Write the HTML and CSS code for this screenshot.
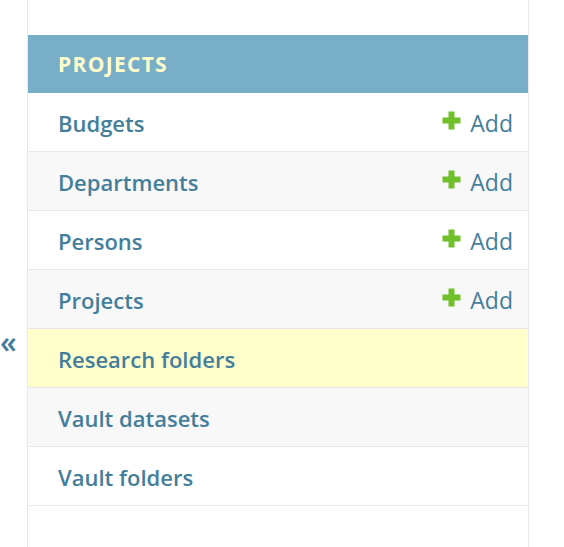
FILE: index.html
```html
<!DOCTYPE html>
<html lang="en">
<head>
<meta charset="utf-8">
<title>Projects</title>
<link rel="stylesheet" href="styles.css">
</head>
<body>
<div class="page">
  <button class="toggle" type="button" aria-label="Toggle navigation">«</button>
  <nav class="sidebar">
    <div class="module">
      <div class="caption">Projects</div>
      <div class="row">
        <a class="model" href="#">Budgets</a>
        <a class="add" href="#"><svg class="plus" viewBox="0 0 19 19" width="19" height="19"><path d="M6.5 0.5h6v6h6v6h-6v6h-6v-6h-6v-6h6z" fill="#70bf2b"/></svg>Add</a>
      </div>
      <div class="row alt">
        <a class="model" href="#">Departments</a>
        <a class="add" href="#"><svg class="plus" viewBox="0 0 19 19" width="19" height="19"><path d="M6.5 0.5h6v6h6v6h-6v6h-6v-6h-6v-6h6z" fill="#70bf2b"/></svg>Add</a>
      </div>
      <div class="row">
        <a class="model" href="#">Persons</a>
        <a class="add" href="#"><svg class="plus" viewBox="0 0 19 19" width="19" height="19"><path d="M6.5 0.5h6v6h6v6h-6v6h-6v-6h-6v-6h6z" fill="#70bf2b"/></svg>Add</a>
      </div>
      <div class="row alt">
        <a class="model" href="#">Projects</a>
        <a class="add" href="#"><svg class="plus" viewBox="0 0 19 19" width="19" height="19"><path d="M6.5 0.5h6v6h6v6h-6v6h-6v-6h-6v-6h6z" fill="#70bf2b"/></svg>Add</a>
      </div>
      <div class="row current">
        <a class="model" href="#">Research folders</a>
      </div>
      <div class="row alt">
        <a class="model" href="#">Vault datasets</a>
      </div>
      <div class="row">
        <a class="model" href="#">Vault folders</a>
      </div>
    </div>
  </nav>
</div>
</body>
</html>
```
FILE: styles.css
```css
html, body {
  margin: 0;
  padding: 0;
  background: #fff;
}
body {
  font-family: "Open Sans", "Noto Sans", "DejaVu Sans", sans-serif;
  color: #333;
}
.page {
  display: flex;
  height: 547px;
  overflow: hidden;
}
.toggle {
  width: 27px;
  flex: none;
  border: 0;
  background: transparent;
  padding: 325px 0 0 0;
  margin: 0;
  align-self: flex-start;
  text-align: left;
  color: #447e9b;
  font-family: "Open Sans", sans-serif;
  font-weight: 600;
  font-size: 30px;
  line-height: 34px;
  cursor: pointer;
}
.sidebar {
  width: 500px;
  flex: none;
  border-left: 1px solid #e8e8e8;
  border-right: 1px solid #e8e8e8;
  padding-top: 35px;
}
.caption {
  height: 58px;
  background: #79aec8;
  color: #ffffcc;
  text-transform: uppercase;
  font-weight: 700;
  font-size: 21px;
  letter-spacing: 1.3px;
  display: flex;
  align-items: center;
  padding-left: 30px;
}
.row {
  height: 58px;
  border-bottom: 1px solid #e8e8e8;
  display: flex;
  align-items: center;
  justify-content: space-between;
  padding: 0 15px 0 30px;
  background: #fff;
}
.row.alt {
  background: #f8f8f8;
}
.row.current {
  background: #ffffcc;
}
.model {
  color: #447e9b;
  text-decoration: none;
  font-weight: 600;
  font-size: 22px;
  position: relative;
  top: 1px;
}
.add {
  color: #447e9b;
  text-decoration: none;
  font-size: 23px;
  display: flex;
  align-items: center;
  position: relative;
  top: 1px;
}
.plus {
  margin-right: 9px;
  position: relative;
  top: -3px;
}
```
